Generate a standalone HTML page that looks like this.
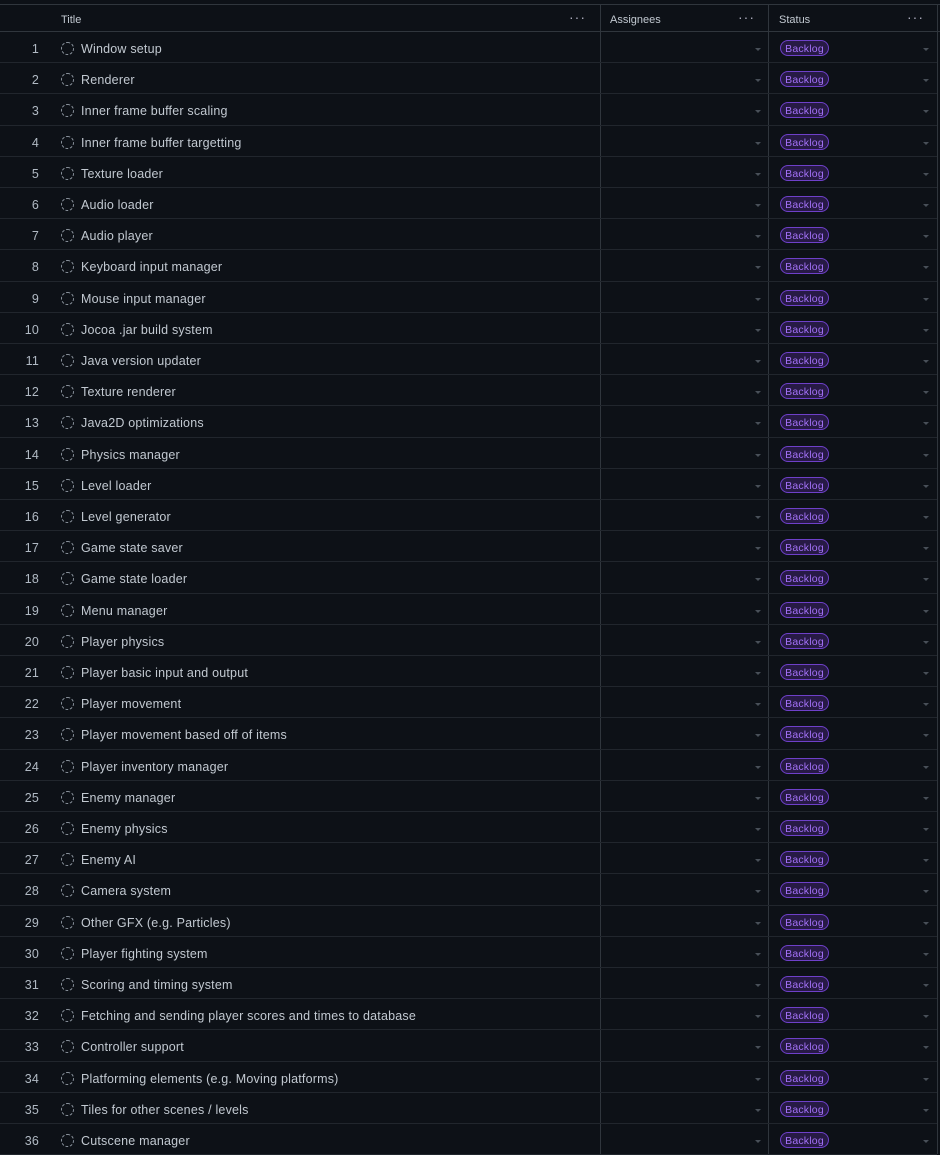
<!DOCTYPE html>
<html><head><meta charset="utf-8"><style>
body{margin:0;width:940px;height:1154px;background:#0d1117;overflow:hidden;font-family:"Liberation Sans",sans-serif;color:#c2c9d1;position:relative}
.top{position:absolute;left:0;top:4px;width:940px;height:1px;background:#30363d}
.hdr{position:absolute;left:0;top:5px;width:940px;height:26px;border-bottom:1px solid #30363d;font-size:11px;color:#c2c9d1}
.hdr span{position:absolute;top:9px}
.hdr .dots{position:absolute;top:4px;font-size:14px;color:#aab;letter-spacing:1px}
.vl{position:absolute;top:5px;bottom:0;width:1px;background:#30363d}
.row{position:absolute;left:0;width:937px;height:31.2px;border-bottom:1px solid #21262d;box-sizing:border-box;font-size:12.5px;letter-spacing:0.2px}
.n{position:absolute;right:898px;top:10px;color:#b1bac4}
.c{position:absolute;left:61px;top:10px;width:11px;height:11px;border:1.3px dashed #8b949e;border-radius:50%}
.t{position:absolute;left:81px;top:10px}
.b{position:absolute;left:780px;top:8px;width:49px;height:16px;border:1px solid #6e40c9;background:#271a45;border-radius:9px;box-sizing:border-box;font-size:10.5px;color:#a371f7;text-align:center;line-height:16px}
.a1,.a2{position:absolute;top:16px;width:0;height:0;border-left:3px solid transparent;border-right:3px solid transparent;border-top:3px solid #484f58}
.a1{left:755px}.a2{left:923px}
</style></head><body>
<div class="top"></div>
<div class="hdr"><span style="left:61px">Title</span><span class="dots" style="left:569px">···</span><span style="left:610px">Assignees</span><span class="dots" style="left:738px">···</span><span style="left:779px">Status</span><span class="dots" style="left:907px">···</span></div>
<div class="vl" style="left:600px"></div><div class="vl" style="left:768px"></div><div class="vl" style="left:937px"></div>
<div class="row" style="top:32.0px"><span class="n">1</span><i class="c"></i><span class="t">Window setup</span><i class="a1"></i><span class="b">Backlog</span><i class="a2"></i></div>
<div class="row" style="top:63.2px"><span class="n">2</span><i class="c"></i><span class="t">Renderer</span><i class="a1"></i><span class="b">Backlog</span><i class="a2"></i></div>
<div class="row" style="top:94.4px"><span class="n">3</span><i class="c"></i><span class="t">Inner frame buffer scaling</span><i class="a1"></i><span class="b">Backlog</span><i class="a2"></i></div>
<div class="row" style="top:125.6px"><span class="n">4</span><i class="c"></i><span class="t">Inner frame buffer targetting</span><i class="a1"></i><span class="b">Backlog</span><i class="a2"></i></div>
<div class="row" style="top:156.8px"><span class="n">5</span><i class="c"></i><span class="t">Texture loader</span><i class="a1"></i><span class="b">Backlog</span><i class="a2"></i></div>
<div class="row" style="top:188.0px"><span class="n">6</span><i class="c"></i><span class="t">Audio loader</span><i class="a1"></i><span class="b">Backlog</span><i class="a2"></i></div>
<div class="row" style="top:219.2px"><span class="n">7</span><i class="c"></i><span class="t">Audio player</span><i class="a1"></i><span class="b">Backlog</span><i class="a2"></i></div>
<div class="row" style="top:250.4px"><span class="n">8</span><i class="c"></i><span class="t">Keyboard input manager</span><i class="a1"></i><span class="b">Backlog</span><i class="a2"></i></div>
<div class="row" style="top:281.6px"><span class="n">9</span><i class="c"></i><span class="t">Mouse input manager</span><i class="a1"></i><span class="b">Backlog</span><i class="a2"></i></div>
<div class="row" style="top:312.8px"><span class="n">10</span><i class="c"></i><span class="t">Jocoa .jar build system</span><i class="a1"></i><span class="b">Backlog</span><i class="a2"></i></div>
<div class="row" style="top:344.0px"><span class="n">11</span><i class="c"></i><span class="t">Java version updater</span><i class="a1"></i><span class="b">Backlog</span><i class="a2"></i></div>
<div class="row" style="top:375.2px"><span class="n">12</span><i class="c"></i><span class="t">Texture renderer</span><i class="a1"></i><span class="b">Backlog</span><i class="a2"></i></div>
<div class="row" style="top:406.4px"><span class="n">13</span><i class="c"></i><span class="t">Java2D optimizations</span><i class="a1"></i><span class="b">Backlog</span><i class="a2"></i></div>
<div class="row" style="top:437.6px"><span class="n">14</span><i class="c"></i><span class="t">Physics manager</span><i class="a1"></i><span class="b">Backlog</span><i class="a2"></i></div>
<div class="row" style="top:468.8px"><span class="n">15</span><i class="c"></i><span class="t">Level loader</span><i class="a1"></i><span class="b">Backlog</span><i class="a2"></i></div>
<div class="row" style="top:500.0px"><span class="n">16</span><i class="c"></i><span class="t">Level generator</span><i class="a1"></i><span class="b">Backlog</span><i class="a2"></i></div>
<div class="row" style="top:531.2px"><span class="n">17</span><i class="c"></i><span class="t">Game state saver</span><i class="a1"></i><span class="b">Backlog</span><i class="a2"></i></div>
<div class="row" style="top:562.4px"><span class="n">18</span><i class="c"></i><span class="t">Game state loader</span><i class="a1"></i><span class="b">Backlog</span><i class="a2"></i></div>
<div class="row" style="top:593.6px"><span class="n">19</span><i class="c"></i><span class="t">Menu manager</span><i class="a1"></i><span class="b">Backlog</span><i class="a2"></i></div>
<div class="row" style="top:624.8px"><span class="n">20</span><i class="c"></i><span class="t">Player physics</span><i class="a1"></i><span class="b">Backlog</span><i class="a2"></i></div>
<div class="row" style="top:656.0px"><span class="n">21</span><i class="c"></i><span class="t">Player basic input and output</span><i class="a1"></i><span class="b">Backlog</span><i class="a2"></i></div>
<div class="row" style="top:687.2px"><span class="n">22</span><i class="c"></i><span class="t">Player movement</span><i class="a1"></i><span class="b">Backlog</span><i class="a2"></i></div>
<div class="row" style="top:718.4px"><span class="n">23</span><i class="c"></i><span class="t">Player movement based off of items</span><i class="a1"></i><span class="b">Backlog</span><i class="a2"></i></div>
<div class="row" style="top:749.6px"><span class="n">24</span><i class="c"></i><span class="t">Player inventory manager</span><i class="a1"></i><span class="b">Backlog</span><i class="a2"></i></div>
<div class="row" style="top:780.8px"><span class="n">25</span><i class="c"></i><span class="t">Enemy manager</span><i class="a1"></i><span class="b">Backlog</span><i class="a2"></i></div>
<div class="row" style="top:812.0px"><span class="n">26</span><i class="c"></i><span class="t">Enemy physics</span><i class="a1"></i><span class="b">Backlog</span><i class="a2"></i></div>
<div class="row" style="top:843.2px"><span class="n">27</span><i class="c"></i><span class="t">Enemy AI</span><i class="a1"></i><span class="b">Backlog</span><i class="a2"></i></div>
<div class="row" style="top:874.4px"><span class="n">28</span><i class="c"></i><span class="t">Camera system</span><i class="a1"></i><span class="b">Backlog</span><i class="a2"></i></div>
<div class="row" style="top:905.6px"><span class="n">29</span><i class="c"></i><span class="t">Other GFX (e.g. Particles)</span><i class="a1"></i><span class="b">Backlog</span><i class="a2"></i></div>
<div class="row" style="top:936.8px"><span class="n">30</span><i class="c"></i><span class="t">Player fighting system</span><i class="a1"></i><span class="b">Backlog</span><i class="a2"></i></div>
<div class="row" style="top:968.0px"><span class="n">31</span><i class="c"></i><span class="t">Scoring and timing system</span><i class="a1"></i><span class="b">Backlog</span><i class="a2"></i></div>
<div class="row" style="top:999.2px"><span class="n">32</span><i class="c"></i><span class="t">Fetching and sending player scores and times to database</span><i class="a1"></i><span class="b">Backlog</span><i class="a2"></i></div>
<div class="row" style="top:1030.4px"><span class="n">33</span><i class="c"></i><span class="t">Controller support</span><i class="a1"></i><span class="b">Backlog</span><i class="a2"></i></div>
<div class="row" style="top:1061.6px"><span class="n">34</span><i class="c"></i><span class="t">Platforming elements (e.g. Moving platforms)</span><i class="a1"></i><span class="b">Backlog</span><i class="a2"></i></div>
<div class="row" style="top:1092.8px"><span class="n">35</span><i class="c"></i><span class="t">Tiles for other scenes / levels</span><i class="a1"></i><span class="b">Backlog</span><i class="a2"></i></div>
<div class="row" style="top:1124.0px"><span class="n">36</span><i class="c"></i><span class="t">Cutscene manager</span><i class="a1"></i><span class="b">Backlog</span><i class="a2"></i></div>
</body></html>
